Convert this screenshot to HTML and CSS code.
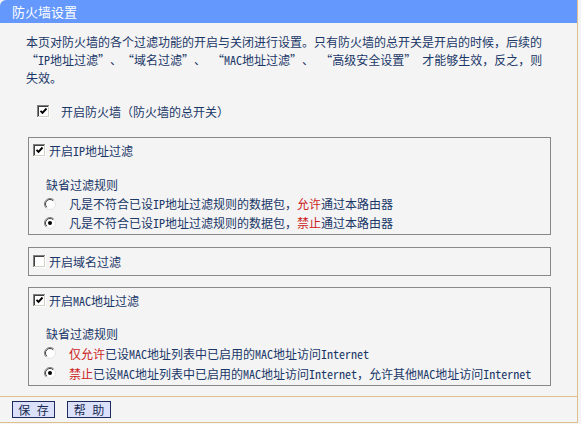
FILE: index.html
```html
<!DOCTYPE html>
<html lang="zh-CN">
<head>
<meta charset="utf-8">
<title>防火墙设置</title>
<link rel="stylesheet" href="styles.css">
</head>
<body>
<div class="panel">
  <div class="header">防火墙设置</div>
  <p class="intro">本页对防火墙的各个过滤功能的开启与关闭进行设置。只有防火墙的总开关是开启的时候，后续的<br><span class="ql">“</span><span class="en">IP</span>地址过滤<span class="qr">”</span>、<span class="ql">“</span>域名过滤<span class="qr">”</span>、&ensp;<span class="ql">“</span><span class="en">MAC</span>地址过滤<span class="qr">”</span>、&ensp;<span class="ql">“</span>高级安全设置<span class="qr">”</span>&ensp;才能够生效，反之，则<br>失效。</p>

  <div class="master">
    <svg class="cb" width="13" height="13" viewBox="0 0 13 13"><rect width="13" height="13" fill="#fff"/><rect width="12" height="12" fill="#808080"/><rect x="1" y="1" width="11" height="11" fill="#d4d0c8"/><rect x="1" y="1" width="10" height="10" fill="#404040"/><rect x="2" y="2" width="9" height="9" fill="#fff"/><path d="M3.5 5.8l2 2 4-4.3" stroke="#000" stroke-width="1.9" fill="none"/></svg>
    <span>开启防火墙（防火墙的总开关）</span>
  </div>

  <div class="box box-ip">
    <div class="check">
      <svg class="cb" width="13" height="13" viewBox="0 0 13 13"><rect width="13" height="13" fill="#fff"/><rect width="12" height="12" fill="#808080"/><rect x="1" y="1" width="11" height="11" fill="#d4d0c8"/><rect x="1" y="1" width="10" height="10" fill="#404040"/><rect x="2" y="2" width="9" height="9" fill="#fff"/><path d="M3.5 5.8l2 2 4-4.3" stroke="#000" stroke-width="1.9" fill="none"/></svg>
      <span>开启<span class="en">IP</span>地址过滤</span>
    </div>
    <div class="rule">缺省过滤规则</div>
    <div class="opt">
      <svg class="rd" width="12" height="12" viewBox="0 0 12 12"><circle cx="6" cy="6" r="5.5" fill="#fff"/><path d="M2.1 9.9A5.5 5.5 0 0 1 9.9 2.1" stroke="#808080" fill="none"/><path d="M9.9 2.1A5.5 5.5 0 0 1 2.1 9.9" stroke="#e4e4e4" fill="none"/><path d="M2.8 9.2A4.5 4.5 0 0 1 9.2 2.8" stroke="#404040" fill="none"/></svg>
      <span>凡是不符合已设<span class="en">IP</span>地址过滤规则的数据包，<em class="red">允许</em>通过本路由器</span>
    </div>
    <div class="opt">
      <svg class="rd" width="12" height="12" viewBox="0 0 12 12"><circle cx="6" cy="6" r="5.5" fill="#fff"/><path d="M2.1 9.9A5.5 5.5 0 0 1 9.9 2.1" stroke="#808080" fill="none"/><path d="M9.9 2.1A5.5 5.5 0 0 1 2.1 9.9" stroke="#e4e4e4" fill="none"/><path d="M2.8 9.2A4.5 4.5 0 0 1 9.2 2.8" stroke="#404040" fill="none"/><circle cx="6" cy="6" r="2" fill="#000"/></svg>
      <span>凡是不符合已设<span class="en">IP</span>地址过滤规则的数据包，<em class="red">禁止</em>通过本路由器</span>
    </div>
  </div>

  <div class="box box-dn">
    <div class="check">
      <svg class="cb" width="13" height="13" viewBox="0 0 13 13"><rect width="13" height="13" fill="#fff"/><rect width="12" height="12" fill="#808080"/><rect x="1" y="1" width="11" height="11" fill="#d4d0c8"/><rect x="1" y="1" width="10" height="10" fill="#404040"/><rect x="2" y="2" width="9" height="9" fill="#fff"/></svg>
      <span>开启域名过滤</span>
    </div>
  </div>

  <div class="box box-mac">
    <div class="check">
      <svg class="cb" width="13" height="13" viewBox="0 0 13 13"><rect width="13" height="13" fill="#fff"/><rect width="12" height="12" fill="#808080"/><rect x="1" y="1" width="11" height="11" fill="#d4d0c8"/><rect x="1" y="1" width="10" height="10" fill="#404040"/><rect x="2" y="2" width="9" height="9" fill="#fff"/><path d="M3.5 5.8l2 2 4-4.3" stroke="#000" stroke-width="1.9" fill="none"/></svg>
      <span>开启<span class="en">MAC</span>地址过滤</span>
    </div>
    <div class="rule">缺省过滤规则</div>
    <div class="opt">
      <svg class="rd" width="12" height="12" viewBox="0 0 12 12"><circle cx="6" cy="6" r="5.5" fill="#fff"/><path d="M2.1 9.9A5.5 5.5 0 0 1 9.9 2.1" stroke="#808080" fill="none"/><path d="M9.9 2.1A5.5 5.5 0 0 1 2.1 9.9" stroke="#e4e4e4" fill="none"/><path d="M2.8 9.2A4.5 4.5 0 0 1 9.2 2.8" stroke="#404040" fill="none"/></svg>
      <span><em class="red">仅允许</em>已设<span class="en">MAC</span>地址列表中已启用的<span class="en">MAC</span>地址访问<span class="en">Internet</span></span>
    </div>
    <div class="opt">
      <svg class="rd" width="12" height="12" viewBox="0 0 12 12"><circle cx="6" cy="6" r="5.5" fill="#fff"/><path d="M2.1 9.9A5.5 5.5 0 0 1 9.9 2.1" stroke="#808080" fill="none"/><path d="M9.9 2.1A5.5 5.5 0 0 1 2.1 9.9" stroke="#e4e4e4" fill="none"/><path d="M2.8 9.2A4.5 4.5 0 0 1 9.2 2.8" stroke="#404040" fill="none"/><circle cx="6" cy="6" r="2" fill="#000"/></svg>
      <span><em class="red">禁止</em>已设<span class="en">MAC</span>地址列表中已启用的<span class="en">MAC</span>地址访问<span class="en">Internet</span>，允许其他<span class="en">MAC</span>地址访问<span class="en">Internet</span></span>
    </div>
  </div>

  <div class="footer">
    <button class="btn btn-save" type="button">保 存</button>
    <button class="btn btn-help" type="button">帮 助</button>
  </div>
</div>
</body>
</html>
```

FILE: styles.css
```css
body {
  margin: 0;
  background: #f4f4f4;
  font-family: "Noto Sans CJK SC", "Noto Sans", sans-serif;
  font-size: 12px;
  color: #1a3768;
}

.panel {
  width: 577px;
  border-right: 1px solid #dfc08c;
}

.header {
  height: 23px;
  line-height: 24px;
  background: #6598fd;
  color: #fff;
  font-size: 13px;
  padding-left: 12px;
  border-top-left-radius: 6px;
}

.intro {
  margin: 10px 0 0;
  padding-left: 26px;
  line-height: 18px;
  white-space: nowrap;
}

.en {
  font-feature-settings: "hwid" 1;
}

.ql,
.qr {
  display: inline-block;
  width: 12px;
}

.ql {
  text-align: right;
}

.qr {
  text-align: left;
}

.master {
  display: flex;
  align-items: center;
  height: 18px;
  margin-top: 15px;
  padding-left: 37px;
  gap: 11px;
}

svg {
  flex: none;
  display: block;
}

.box {
  box-sizing: border-box;
  width: 523px;
  margin-left: 28px;
  border: 1px solid #888;
  padding: 3px 4px 2px;
}

.box-ip {
  margin-top: 17px;
}

.box-dn {
  margin-top: 12px;
  padding-top: 4px;
  padding-bottom: 5px;
}

.box-mac {
  margin-top: 11px;
}

.check {
  display: flex;
  align-items: center;
  gap: 3px;
  height: 18px;
}

.rule {
  margin: 16px 0 0 13px;
  height: 19px;
  line-height: 19px;
}

.box-mac .rule {
  margin-top: 15px;
}

.opt {
  display: flex;
  align-items: center;
  height: 19px;
  padding-left: 11px;
  gap: 13px;
  white-space: nowrap;
}

.box-mac .opt {
  height: 20px;
}

.red {
  font-style: normal;
  color: #cc2222;
}

.footer {
  display: flex;
  gap: 12px;
  margin-top: 10px;
  padding: 4px 12px;
  border-top: 1px solid #dfc08c;
  border-bottom: 1px solid #dfc08c;
}

.btn {
  box-sizing: border-box;
  height: 17px;
  padding: 0;
  margin: 0;
  border: 1px solid #1d2c5c;
  background: #dbe1fb;
  color: #1a2a50;
  font-family: "Noto Sans CJK SC", sans-serif;
  font-size: 12px;
  line-height: 15px;
  word-spacing: 4px;
  text-align: center;
}

.btn-save {
  width: 43px;
}

.btn-help {
  width: 44px;
}
```
